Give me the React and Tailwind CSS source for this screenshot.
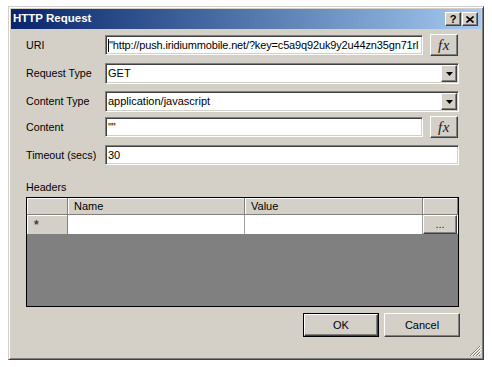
const face = 'bg-[#d4d0c8]';
const sunken =
  'border border-t-[#808080] border-l-[#808080] border-b-white border-r-white shadow-[inset_1px_1px_0_#404040,inset_-1px_-1px_0_#d4d0c8]';
const raised =
  'border border-t-white border-l-white border-b-[#404040] border-r-[#404040] shadow-[inset_-1px_-1px_0_#808080]';

const Label = ({ children }) => (
  <div className="w-[79px] shrink-0 text-[10.7px] leading-[13px] text-black">{children}</div>
);

const FxButton = () => (
  <button className={`ml-[7px] w-[28px] h-[22px] ${face} ${raised} flex items-center justify-center`}>
    <span className="font-['Liberation_Serif',serif] italic text-[15px] leading-none text-[#202020] tracking-[0.5px]">
      fx
    </span>
  </button>
);

const TextBox = ({ value, width, caret }) => (
  <div className={`${width} h-[20px] bg-white ${sunken} flex items-center pl-[2px] overflow-hidden`}>
    {caret && <span className="w-px h-[13px] bg-black shrink-0" />}
    <span className="text-[11px] leading-[13px] text-black whitespace-nowrap tracking-[-0.15px]">{value}</span>
  </div>
);

const Select = ({ value }) => (
  <div className={`w-[354px] h-[21px] bg-white ${sunken} flex items-center pl-[2px] pr-px`}>
    <span className="flex-1 text-[11px] leading-[13px] text-black">{value}</span>
    <div className={`w-[16px] h-[17px] ${face} ${raised} flex items-center justify-center`}>
      <svg width="7" height="4" viewBox="0 0 7 4">
        <path d="M0 0h7L3.5 4z" fill="#000" />
      </svg>
    </div>
  </div>
);

const HeaderCell = ({ w, children }) => (
  <div
    className={`${w} h-full ${face} border-r border-r-[#808080] shadow-[inset_1px_1px_0_#fff] flex items-center pl-[6px] text-[11px] text-black`}>
    {children}
  </div>
);

export default function App() {
  return (
    <div className="min-h-screen bg-white pt-[6px] pl-[8px] font-['Liberation_Sans',Arial,sans-serif]">
      <div
        className={`relative w-[476px] h-[354px] ${face} border border-t-[#d4d0c8] border-l-[#d4d0c8] border-b-[#404040] border-r-[#404040] shadow-[inset_1px_1px_0_#fff,inset_-1px_-1px_0_#808080] p-[2px] flex flex-col`}>
        <div className="h-[20px] bg-gradient-to-r from-[#0a246a] to-[#a6caf0] flex items-center pl-[2px] pr-[3px]">
          <span className="flex-1 text-white font-bold text-[11.5px] leading-none">HTTP Request</span>
          <button className={`w-[16px] h-[14px] ${face} ${raised} flex items-center justify-center`}>
            <span className="text-[11px] font-bold leading-none text-black">?</span>
          </button>
          <button className={`ml-px w-[16px] h-[14px] ${face} ${raised} flex items-center justify-center`}>
            <svg width="8" height="7" viewBox="0 0 8 7">
              <path d="M0.5 0.5L7.5 6.5M7.5 0.5L0.5 6.5" stroke="#000" strokeWidth="1.6" />
            </svg>
          </button>
        </div>

        <div className="flex flex-col pl-[15px]">
          <div className="mt-[5px] h-[22px] flex items-center">
            <Label>URI</Label>
            <TextBox
              width="w-[318px]"
              caret
              value={'"http://push.iridiummobile.net/?key=c5a9q92uk9y2u44zn35gn71rl'}
            />
            <FxButton />
          </div>
          <div className="mt-[7px] h-[21px] flex items-center">
            <Label>Request Type</Label>
            <Select value="GET" />
          </div>
          <div className="mt-[7px] h-[21px] flex items-center">
            <Label>Content Type</Label>
            <Select value="application/javascript" />
          </div>
          <div className="mt-[4px] h-[22px] flex items-center">
            <Label>Content</Label>
            <TextBox width="w-[318px]" value={'""'} />
            <FxButton />
          </div>
          <div className="mt-[7px] h-[20px] flex items-center">
            <Label>Timeout (secs)</Label>
            <TextBox width="w-[354px]" value="30" />
          </div>

          <div className="mt-[16px] h-[13px] text-[10.7px] leading-[13px] text-black">Headers</div>

          <div className="mt-[3px] w-[433px] h-[110px] border border-black bg-[#808080] flex flex-col">
            <div className="h-[17px] flex border-b border-b-[#808080]">
              <HeaderCell w="w-[41px]" />
              <HeaderCell w="w-[177px]">Name</HeaderCell>
              <HeaderCell w="w-[178px]">Value</HeaderCell>
              <HeaderCell w="flex-1" />
            </div>
            <div className="h-[20px] flex border-b border-b-[#808080]">
              <div className={`w-[41px] h-full ${face} border-r border-r-[#808080] shadow-[inset_1px_1px_0_#fff] flex items-center pl-[7px]`}>
                <span className="text-[12px] font-bold leading-none text-[#404040]">*</span>
              </div>
              <div className="w-[177px] h-full bg-white border-r border-r-[#a0a0a0]" />
              <div className="w-[178px] h-full bg-white border-r border-r-[#a0a0a0]" />
              <div className="flex-1 h-full bg-white pr-px">
                <button className={`w-full h-full ${face} ${raised} flex items-end justify-center pb-[3px]`}>
                  <span className="text-[11px] leading-none text-[#202040]">...</span>
                </button>
              </div>
            </div>
          </div>

          <div className="mt-[6px] w-[434px] flex justify-end gap-[5px]">
            <button className="w-[76px] h-[24px] border border-black p-0">
              <div className={`w-full h-full ${face} ${raised} flex items-center justify-center text-[11px] text-black`}>
                OK
              </div>
            </button>
            <button className={`w-[76px] h-[24px] ${face} ${raised} flex items-center justify-center text-[11px] text-black`}>
              Cancel
            </button>
          </div>
        </div>

        <svg className="absolute right-[2px] bottom-[2px]" width="12" height="12" viewBox="0 0 12 12">
          <path d="M11 1L1 11M11 4L4 11M11 7L7 11M11 10L10 11" stroke="#808080" strokeWidth="1" />
          <path d="M12 1L2 11M12 4L5 11M12 7L8 11" stroke="#fff" strokeWidth="1" />
        </svg>
      </div>
    </div>
  );
}
